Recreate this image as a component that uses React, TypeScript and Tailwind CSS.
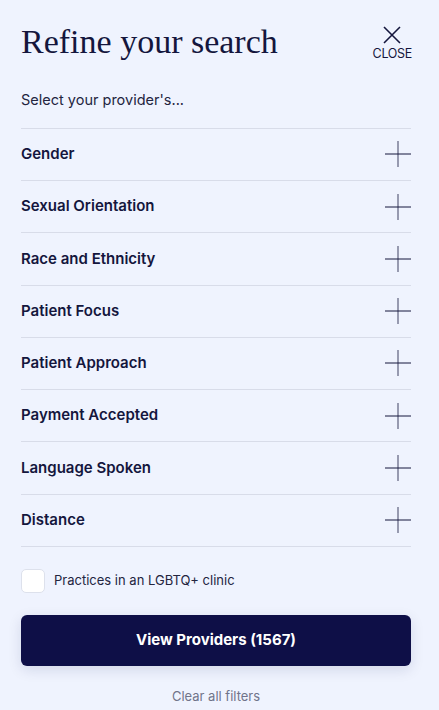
import React from 'react';

const filters = [
  'Gender',
  'Sexual Orientation',
  'Race and Ethnicity',
  'Patient Focus',
  'Patient Approach',
  'Payment Accepted',
  'Language Spoken',
  'Distance',
];

const PlusIcon = () => (
  <svg width="26" height="26" viewBox="0 0 26 26" fill="none">
    <path d="M13 0V26" stroke="#7a7c96" strokeWidth="1.5" />
    <path d="M0 13H26" stroke="#14163d" strokeWidth="1" />
  </svg>
);

export default function App() {
  return (
    <div
      className="w-[439px] h-[710px] bg-[#eff3fe] text-[#16183f] overflow-hidden"
      style={{ fontFamily: 'Inter, "Noto Sans", sans-serif' }}
    >
      <div className="pl-[21px] pr-[28px]">
        <div className="flex items-start justify-between pt-[21px]">
          <h1
            className="text-[34px] leading-[42px] text-[#14163d]"
            style={{ fontFamily: '"Liberation Serif", serif' }}
          >
            Refine your search
          </h1>
          <button className="flex flex-col items-center mt-[5px] -mr-[1px]">
            <svg width="18" height="18" viewBox="0 0 18 18" fill="none">
              <path d="M1 1L17 17M17 1L1 17" stroke="#14163d" strokeWidth="1.6" />
            </svg>
            <span className="text-[12.5px] leading-[14px] mt-[3px] tracking-[-0.3px] text-[#14163d]">CLOSE</span>
          </button>
        </div>
      </div>
      <div className="px-[21px] w-[390px] box-content">
        <p className="text-[14.5px] mt-[26px] mb-[17px] text-[#23253f]">Select your provider's...</p>
        <ul className="border-t border-[#d8dce9]">
          {filters.map((f) => (
            <li
              key={f}
              className="h-[52.25px] flex items-center justify-between border-b border-[#d8dce9]"
            >
              <span className="text-[15px] font-semibold text-[#14163d]">{f}</span>
              <PlusIcon />
            </li>
          ))}
        </ul>
        <label className="flex items-center gap-[9px] mt-[22px]">
          <span className="w-[24px] h-[24px] rounded-[5px] bg-white border border-[#dde1ec]" />
          <span className="text-[13px] text-[#23253f]">Practices in an LGBTQ+ clinic</span>
        </label>
        <button className="mt-[22px] w-[390px] h-[51px] rounded-[6px] bg-[#0e0f47] text-white text-[15px] font-bold shadow-[0_4px_14px_rgba(20,22,80,0.12)]">
          View Providers (1567)
        </button>
        <p className="text-center w-[390px] text-[13px] text-[#70738a] mt-[21px]">Clear all filters</p>
      </div>
    </div>
  );
}
